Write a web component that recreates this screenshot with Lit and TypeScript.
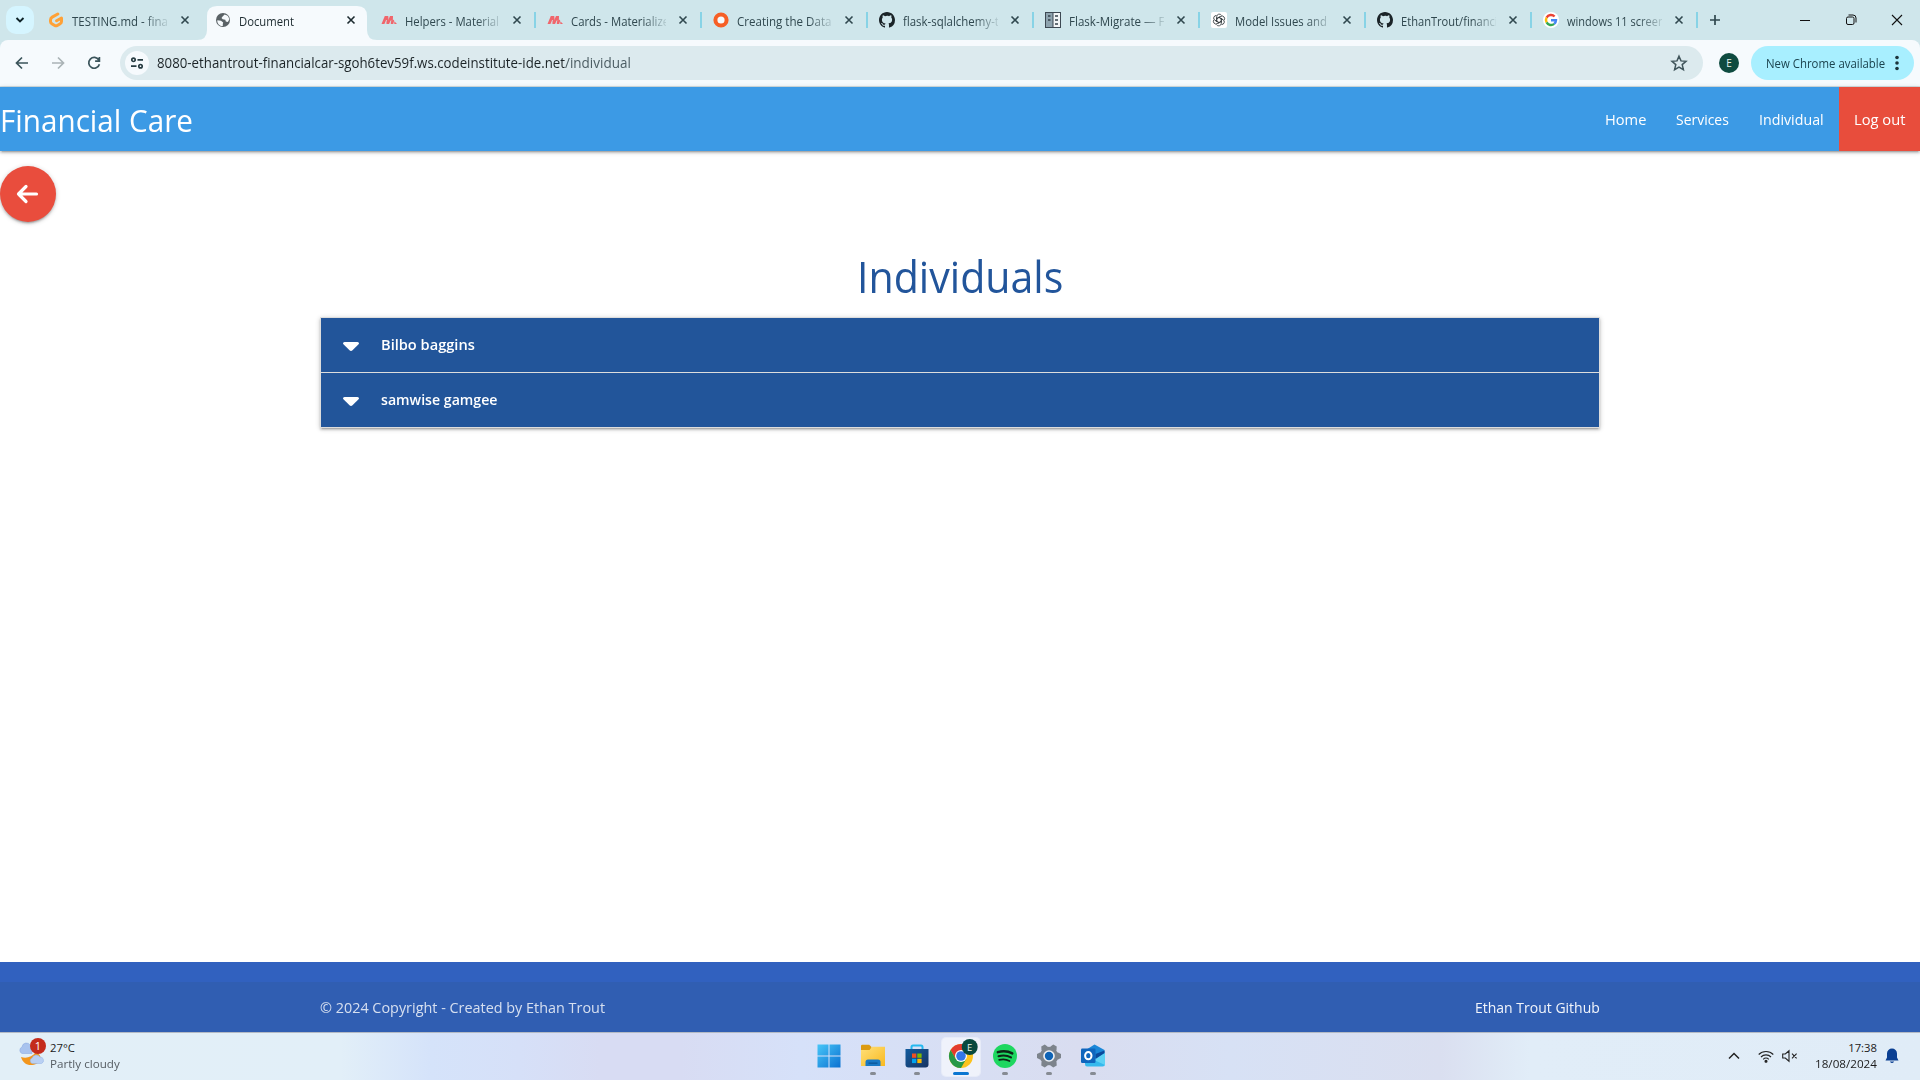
import { LitElement, html, css, svg, nothing } from "lit";
import { customElement, property } from "lit/decorators.js";

/** Text condensed or widened to a known advance width. */
@customElement("fit-text")
export class FitText extends LitElement {
  @property() text = "";
  @property({ type: Number }) width = 0;
  static styles = css`
    :host { display: inline-block; white-space: pre; }
    span { display: inline-block; transform-origin: 0 50%; }
  `;
  updated() {
    const s = this.shadowRoot!.querySelector("span")!;
    const w = s.offsetWidth;
    s.style.transform = `scaleX(${this.width / w})`;
    s.style.marginRight = `${this.width - w}px`;
  }
  render() {
    return html`<span>${this.text}</span>`;
  }
}

const fit = (text: string, width: number) => html`<fit-text .text=${text} .width=${width}></fit-text>`;

const github = svg`<path fill="#1b2428" d="M8 0C3.58 0 0 3.58 0 8c0 3.54 2.29 6.53 5.47 7.59.4.07.55-.17.55-.38 0-.19-.01-.82-.01-1.49-2.01.37-2.53-.49-2.69-.94-.09-.23-.48-.94-.82-1.13-.28-.15-.68-.52-.01-.53.63-.01 1.08.58 1.23.82.72 1.21 1.87.87 2.33.66.07-.52.28-.87.51-1.07-1.78-.2-3.64-.89-3.64-3.95 0-.87.31-1.59.82-2.15-.08-.2-.36-1.02.08-2.12 0 0 .67-.21 2.2.82A7.7 7.7 0 0 1 8 3.86c.68 0 1.36.09 2 .27 1.53-1.04 2.2-.82 2.2-.82.44 1.1.16 1.92.08 2.12.51.56.82 1.27.82 2.15 0 3.07-1.87 3.75-3.65 3.95.29.25.54.73.54 1.48 0 1.07-.01 1.93-.01 2.2 0 .21.15.46.55.38A8.01 8.01 0 0 0 16 8c0-4.42-3.58-8-8-8z"/>`;
const materialize = svg`<g fill="#f0666c"><path d="M.5 12 3.800 4h3.400L4 12z"/><path d="M4.700 4h2.500l.6 5.500L6.500 12H5.600z"/><path d="M5.600 12 9 4h3L8.400 12z"/><path d="M9.500 4H12l-.3 8H9.800z"/><path d="M9.800 12 12 7.600l1.200.8L12.200 12zM13.300 9.300 16 12h-2.700z"/></g><path stroke="#cfe6eb" stroke-width=".8" d="M3.600 12.600 5.600 8M8.400 12.600 10 8.500"/>`;

const icons: Record<string, unknown> = {
  gitpod: svg`<path d="M9.800 2 4.200 5.100Q2.500 6.100 2.500 8v1.600Q2.500 11 3.800 11.800L6.700 13.500Q8 14.200 9.300 13.500L12.200 11.800Q13.500 11 13.500 9.600V6L8.600 8.800" fill="none" stroke="#ffa136" stroke-width="3" stroke-linecap="round" stroke-linejoin="round"/>`,
  globe: svg`<circle cx="8" cy="8" r="7" fill="#5a6266"/><path fill="#f6fafd" d="M2.300 8.200 6 8.800l2.200 1.800-.4 1.500v2C4.600 14.200 2 11.400 2.300 8.200zM7.600 4.600 9.600 2.500l2.600.9c1.200 1 2 2.600 2 4.400l-1.400 2.300-2-.6-.5-1.700-2.600-.5L6.500 6z"/>`,
  materialize,
  ring: svg`<circle cx="8" cy="8" r="5.600" fill="#f6fafd" stroke="#f65f26" stroke-width="4"/>`,
  github,
  docs: svg`<path fill="#3d4852" d="M0 0h16v16H0z"/><path fill="#8ea3ae" d="M1 1h6.500v14H1z"/><path fill="#f2f5f6" d="M8.500 1H15v14H8.500z"/><path stroke="#36424b" stroke-width="1.600" d="M3 4h2.500M3 8h2.500M10 4h3M10 8h3M10 12h3"/>`,
  openai: svg`<rect width="16" height="16" rx="2" fill="#fff"/><g fill="none" stroke="#30383c" stroke-width=".8">${[0, 60, 120, 180, 240, 300].map(
    (a) => svg`<path transform="rotate(${a} 8 8)" d="M5.700 9.500V4.600A2.600 2.600 0 0 1 10.600 3.500M8 5.400 11.500 7.400"/>`,
  )}</g>`,
  google: svg`<circle cx="8" cy="8" r="8" fill="#fff"/><g fill="none" stroke-width="2.400"><path stroke="#ea4335" d="M3.600 5.600A5 5 0 0 1 11.600 4.500"/><path stroke="#fbbc05" d="M3.600 10.400A5 5 0 0 1 3.600 5.600"/><path stroke="#34a853" d="M3.600 10.400A5 5 0 0 0 11.200 11.900"/><path stroke="#4285f4" d="M8 8.200h5A5 5 0 0 1 11.200 11.900"/></g>`,
};

interface Tab { icon: string; title: string; width: number; active?: boolean; sep?: boolean; }
const tabs: Tab[] = [
  { icon: "gitpod", title: "TESTING.md - fina", width: 96 },
  { icon: "globe", title: "Document", width: 55, active: true },
  { icon: "materialize", title: "Helpers - Material", width: 94, sep: true },
  { icon: "materialize", title: "Cards - Materialize", width: 98, sep: true },
  { icon: "ring", title: "Creating the Data", width: 94, sep: true },
  { icon: "github", title: "flask-sqlalchemy-t", width: 96, sep: true },
  { icon: "docs", title: "Flask-Migrate — F", width: 96, sep: true },
  { icon: "openai", title: "Model Issues and", width: 92, sep: true },
  { icon: "github", title: "EthanTrout/financi", width: 97, sep: true },
  { icon: "google", title: "windows 11 screen", width: 98, sep: true },
];

@customElement("browser-chrome")
export class BrowserChrome extends LitElement {
  static styles = css`
    :host { display: block; height: 87px; flex: none; background: #cfe6eb; font-family: "Open Sans", "Noto Sans", sans-serif; color: #30484f; }
    svg { display: block; flex: none; }
    .strip { display: flex; height: 40px; align-items: center; }
    .search { width: 28px; height: 28px; margin-left: 6px; border-radius: 10px; background: #d5f5ff; display: grid; place-items: center; }
    .tabs { display: flex; margin-left: 2px; height: 40px; }
    .tab { position: relative; box-sizing: border-box; width: 166px; height: 40px; padding: 0 0 0 12px; display: flex; align-items: center; font-size: 11.700px; }
    .tab:first-child { margin-right: 1px; }
    .tab.active { color: #1d2b30; }
    .tab > * { position: relative; }
    .tab .bg { position: absolute; left: -6px; top: 6px; }
    .title { width: 95px; margin-left: 8px; line-height: 20px; padding-top: 1px; white-space: nowrap; }
    .faded { -webkit-mask-image: linear-gradient(90deg, #000 75%, rgba(0,0,0,.15)); mask-image: linear-gradient(90deg, #000 75%, rgba(0,0,0,.15)); }
    .close { margin-left: 11px; }
    .tab:first-child .close { margin-left: 12px; }
    .sep { position: absolute; right: -1px; top: 12px; width: 2px; height: 16px; background: #87d3e6; }
    .plus { margin-left: 12px; }
    .controls { margin-left: auto; display: flex; gap: 34px; padding-right: 17px; }
    .bar { height: 46px; background: #f6fafd; border-bottom: 1px solid #d3dfe2; border-radius: 8px 8px 0 0; display: flex; align-items: center; }
    .nav { display: flex; gap: 16px; padding-left: 12px; }
    .url { display: flex; align-items: center; height: 34px; width: 1583px; box-sizing: border-box; border-radius: 17px; background: #dceaee; margin-left: 16px; padding: 0 14px 0 5px; font-size: 13.700px; color: #1c2427; }
    .url fit-text { margin-bottom: 1px; }
    .tune { width: 24px; height: 24px; border-radius: 50%; background: #f6fafd; display: grid; place-items: center; margin-right: 8px; }
    .path { color: #4c5d63; }
    .star { margin-left: auto; }
    .avatar { width: 20px; height: 20px; border-radius: 50%; background: #0f4b40; color: #e6f2ee; display: grid; place-items: center; font-size: 10px; margin-left: 16px; }
    .chip { width: 163px; height: 34px; border-radius: 17px; background: #a8efff; box-sizing: border-box; display: flex; align-items: center; padding: 0 15px; font-size: 11.700px; color: #1c444f; margin-left: 12px; justify-content: space-between; }
    .chip fit-text { margin-bottom: 1px; }
  `;
  private tab(t: Tab) {
    return html`<div class="tab ${t.active ? "active" : ""}">
      ${t.active ? html`<svg class="bg" width="184" height="34"><path fill="#f6fafd" d="M0 34Q10 34 10 24V10Q10 0 20 0H160Q170 0 170 10V24Q170 34 180 34z"/></svg>` : nothing}
      <svg width="16" height="16" viewBox="0 0 16 16">${icons[t.icon]}</svg>
      <div class="title ${t.active ? "" : "faded"}">${fit(t.title, t.width)}</div>
      <svg class="close" width="12" height="12" viewBox="0 0 12 12"><path d="M2.500 2.500l7 7M9.500 2.500l-7 7" stroke="currentColor" stroke-width="1.600"/></svg>
      ${t.sep ? html`<div class="sep"></div>` : nothing}
    </div>`;
  }
  render() {
    return html`
      <div class="strip">
        <div class="search"><svg width="10" height="8" viewBox="0 0 10 8"><path d="M1.500 2 5 5.500 8.500 2" fill="none" stroke="#0f2429" stroke-width="1.900"/></svg></div>
        <div class="tabs">${tabs.map((t) => this.tab(t))}</div>
        <svg class="plus" width="12" height="12" viewBox="0 0 12 12"><path d="M6 1v10M1 6h10" stroke="#30484f" stroke-width="1.700"/></svg>
        <div class="controls">
          <svg width="12" height="12"><path d="M1 6.500h10" stroke="#111"/></svg>
          <svg width="12" height="12" viewBox="0 0 12 12" fill="none" stroke="#111"><rect x="1.500" y="3" width="7.500" height="7.500" rx="1.500"/><path d="M3.500 1h4.500a3 3 0 0 1 3 3v4.500"/></svg>
          <svg width="12" height="12"><path d="M1 1l10 10M11 1 1 11" stroke="#111" stroke-width="1.100"/></svg>
        </div>
      </div>
      <div class="bar">
        <div class="nav">
          <svg width="20" height="20" viewBox="0 0 20 20" fill="none" stroke="#3b545b" stroke-width="1.700"><path d="M16 10H5M10 4.500 4.500 10l5.500 5.500"/></svg>
          <svg width="20" height="20" viewBox="0 0 20 20" fill="none" stroke="#aab3b6" stroke-width="1.700"><path d="M4 10h11M10 4.500l5.500 5.500-5.500 5.500"/></svg>
          <svg width="20" height="20" viewBox="0 0 20 20" fill="none" stroke="#3b545b" stroke-width="1.700"><path d="M14.800 7A5.400 5.400 0 1 0 15.400 11.200M15.400 4v4.200h-4.300"/></svg>
        </div>
        <div class="url">
          <div class="tune"><svg width="14" height="14" viewBox="0 0 14 14" fill="none" stroke="#273c42" stroke-width="1.700"><circle cx="3.500" cy="3.800" r="1.700"/><path d="M7.500 3.800H13M1 10.200h5.500"/><circle cx="10.500" cy="10.200" r="1.700"/></svg></div>
          ${fit("8080-ethantrout-financialcar-sgoh6tev59f.ws.codeinstitute-ide.net", 408)}<span class="path">${fit("/individual", 66)}</span>
          <svg class="star" width="20" height="20" viewBox="0 0 20 20"><path d="M10 3.200l2 4.700 5 .4-3.800 3.300 1.200 5L10 14l-4.400 2.600 1.200-5L3 8.300l5-.4z" fill="none" stroke="#40555b" stroke-width="1.500"/></svg>
        </div>
        <div class="avatar">E</div>
        <div class="chip">${fit("New Chrome available", 119)}<svg width="4" height="16"><g fill="#1c343b"><circle cx="2" cy="2.500" r="1.800"/><circle cx="2" cy="8" r="1.800"/><circle cx="2" cy="13.500" r="1.800"/></g></svg></div>
      </div>`;
  }
}

@customElement("care-page")
export class CarePage extends LitElement {
  static styles = css`
    :host { display: flex; flex-direction: column; height: 945px; background: #fff; font-family: "Open Sans", "Noto Sans", sans-serif; font-size: 15px; }
    svg { display: block; }
    nav { display: flex; align-items: center; justify-content: space-between; height: 64px; flex: none; background: #3c9ae5; color: #fff; box-shadow: 0 2px 2px 0 rgba(0,0,0,.14), 0 3px 1px -2px rgba(0,0,0,.12), 0 1px 5px 0 rgba(0,0,0,.2); }
    .brand { font-size: 31.500px; line-height: 64px; height: 62px; }
    .links { display: flex; height: 64px; }
    .links div { padding: 1px 15px 0; height: 63px; line-height: 63px; }
    .links .out { background: #e84d3c; }
    .back { width: 56px; height: 56px; margin-top: 15px; border-radius: 50%; background: #e94d3d; display: grid; place-items: center; box-shadow: 0 2px 2px 0 rgba(0,0,0,.14), 0 3px 1px -2px rgba(0,0,0,.12), 0 1px 5px 0 rgba(0,0,0,.2); }
    .back svg { margin-right: 2px; }
    h3 { margin: 25px 0 11px; text-align: center; font-weight: 400; font-size: 43.500px; line-height: 59px; color: #22559b; }
    .list { width: 1280px; box-sizing: border-box; margin: 0 auto; border: 1px solid #ddd; border-bottom: 0; box-shadow: 0 2px 2px 0 rgba(0,0,0,.14), 0 3px 1px -2px rgba(0,0,0,.12), 0 1px 5px 0 rgba(0,0,0,.2); }
    .row { height: 54px; border-bottom: 1px solid #ddd; background: #22559a; color: #fff; display: flex; align-items: center; font-weight: 600; padding-left: 22px; }
    .row svg { margin-right: 22px; margin-top: 3px; }
    .row fit-text { margin-bottom: 2px; }
    footer { margin-top: auto; padding-top: 20px; background: #3161bf; color: rgba(255,255,255,.8); }
    .copy { height: 50px; background: #305eb2; }
    .inner { width: 1280px; margin: 0 auto; line-height: 50px; height: 50px; display: flex; justify-content: space-between; }
    .inner .gh { color: #f2f5fb; }
  `;
  render() {
    return html`
      <nav>
        <div class="brand">${fit("Financial Care", 193)}</div>
        <div class="links">
          <div>${fit("Home", 41)}</div><div>${fit("Services", 53)}</div><div>${fit("Individual", 64.5)}</div><div class="out">${fit("Log out", 51)}</div>
        </div>
      </nav>
      <div class="back"><svg width="24" height="20" viewBox="0 0 24 20"><path d="M21.500 10H3.500M11 2.500 3.500 10l7.500 7.500" fill="none" stroke="#fff" stroke-width="3.200" stroke-linecap="round" stroke-linejoin="round"/></svg></div>
      <h3>${fit("Individuals", 206)}</h3>
      <div class="list">
        ${[["Bilbo baggins", 93.5], ["samwise gamgee", 117]].map(
          ([n, w]) => html`<div class="row"><svg width="16" height="10" viewBox="0 0 16 10"><path fill="#fff" d="M1.500 0h13Q17 .5 15.300 2.500L9.500 8.200Q8 9.600 6.500 8.200L.7 2.500Q-1 .5 1.500 0z"/></svg>${fit(n as string, w as number)}</div>`,
        )}
      </div>
      <footer><div class="copy"><div class="inner"><span>${fit("© 2024 Copyright - Created by Ethan Trout", 285)}</span><span class="gh">${fit("Ethan Trout Github", 125)}</span></div></div></footer>`;
  }
}

@customElement("task-bar")
export class TaskBar extends LitElement {
  static styles = css`
    :host { display: grid; grid-template-columns: 1fr auto 1fr; height: 48px; box-sizing: border-box; border-top: 1px solid #b4bac4; font-family: "Open Sans", "Noto Sans", sans-serif; font-size: 11.300px; color: #1b1b1b;
      background: linear-gradient(90deg, #e2eff7 0, #e2eff8 340px, #d5e3fa 430px, #d6e0f8 520px, #d8dcf3 600px, #d8dcf3 680px, #d6e1f9 800px, #d9ddf0 1080px, #d7e1f5 1230px, #dadff0 1440px, #e1edf8 1530px, #e0ecf7 100%); }
    svg { display: block; flex: none; overflow: visible; }
    .weather { display: flex; padding: 5px 0 0 18px; }
    .lines { line-height: 16px; padding-top: 2px; margin-left: 4px; }
    .dim { color: #555c62; }
    .apps { display: flex; gap: 6px; padding: 5px 0 0 2px; }
    .app { width: 38px; height: 38px; border-radius: 4px; display: flex; flex-direction: column; align-items: center; }
    .app.on { background: rgba(255,255,255,.6); box-shadow: 0 0 0 1px rgba(255,255,255,.4); }
    .app svg { margin-top: 6px; }
    .dot { width: 6px; height: 3px; border-radius: 2px; background: #868b93; margin-top: 4px; }
    .on .dot { width: 16px; background: #0a76d1; }
    .tray { display: flex; justify-content: flex-end; align-items: center; padding: 0 21px 2px 0; }
    .wifi { margin-left: 18px; }
    .mute { margin-left: 8px; }
    .clock { text-align: right; line-height: 16px; margin: 0 8px 0 17px; }
  `;
  private app(body: unknown, dot = true, on = false) {
    return html`<div class="app ${on ? "on" : ""}"><svg width="24" height="24" viewBox="0 0 24 24">${body}</svg>${dot ? html`<div class="dot"></div>` : nothing}</div>`;
  }
  render() {
    return html`
      <div class="weather">
        <svg width="28" height="28" viewBox="0 0 28 28">
          <path fill="#a9c3ee" stroke="#86a5de" stroke-width=".5" d="M4 15.500a3.500 3.500 0 0 1 0-6.500 4.500 4.500 0 0 1 8.500-1.500L14 15.500z"/>
          <path fill="#f3961c" d="M3 19c5 1.500 11 .5 15-5 6 3 6 9 1 11.500C12 29 5 26.500 3 19z"/>
          <path fill="#b9d0f3" stroke="#8eb0e6" stroke-width=".5" d="M14 25.500a3 3 0 0 1 0-5.500 4.500 4.500 0 0 1 8-1 3.400 3.400 0 0 1 1.500 6.500z"/>
          <circle cx="20" cy="8" r="8" fill="#c42b1c"/><text x="20" y="12" font-size="11" fill="#fff" text-anchor="middle">1</text>
        </svg>
        <div class="lines"><div>${fit("27°C", 25)}</div><div class="dim">${fit("Partly cloudy", 70)}</div></div>
      </div>
      <div class="apps">
        ${this.app(svg`<defs><linearGradient id="w" gradientUnits="userSpaceOnUse" x2="24" y2="24"><stop stop-color="#49c8f9"/><stop offset="1" stop-color="#0a6fd0"/></linearGradient></defs><g fill="url(#w)"><rect x=".5" y=".5" width="11" height="11"/><rect x="12.500" y=".5" width="11" height="11"/><rect x=".5" y="12.500" width="11" height="11"/><rect x="12.500" y="12.500" width="11" height="11"/></g>`, false)}
        ${this.app(svg`<defs><linearGradient id="f" x2="1" y2="1"><stop stop-color="#ffe07a"/><stop offset="1" stop-color="#f9b91f"/></linearGradient></defs><path fill="#dc9a10" d="M0 2Q0 .8 1.200 .8h7L10.500 3v4H0z"/><path fill="url(#f)" d="M0 6h8.500L11 2.800h13V22H0z"/><path fill="#1979c5" d="M4.500 22v-4q0-2.500 2.500-2.500h10q2.500 0 2.500 2.500v4z"/><path fill="#0c5697" d="M7.500 18.500h9v1.300h-9z"/>`)}
        ${this.app(svg`<defs><linearGradient id="s" x2="1" y2="1"><stop stop-color="#125b9e"/><stop offset="1" stop-color="#183462"/></linearGradient></defs><path d="M6.500 6V3q0-1.500 1.500-1.500h8q1.500 0 1.500 1.500v3" fill="none" stroke="#24b8ef" stroke-width="2"/><path fill="url(#s)" d="M.5 5h23v15.500q0 3-3 3h-17q-3 0-3-3z"/><path fill="#f25022" d="M7 9.500h4.300v4.300H7z"/><path fill="#7fba00" d="M12.300 9.500h4.300v4.300h-4.300z"/><path fill="#00a4ef" d="M7 14.800h4.300v4.300H7z"/><path fill="#ffb900" d="M12.300 14.800h4.300v4.300h-4.300z"/>`)}
        ${this.app(svg`<circle cx="12" cy="12" r="12" fill="#fcc31e"/><path fill="#e33b2e" d="M1.600 6A12 12 0 0 1 22.400 6H12L6.800 15z"/><path fill="#279847" d="M1.600 6A12 12 0 0 0 12 24l5.200-9H6.800z"/><circle cx="12" cy="12" r="6" fill="#fff"/><circle cx="12" cy="12" r="4.800" fill="#3277e8"/><circle cx="20.700" cy="3" r="8" fill="#07493e"/><text x="20.700" y="6.500" font-size="9.500" fill="#e8f3ee" text-anchor="middle">E</text>`, true, true)}
        ${this.app(svg`<circle cx="12" cy="12" r="12" fill="#1ed760"/><g fill="none" stroke="#0d2617" stroke-linecap="round"><path stroke-width="2.400" d="M4.800 8.200c5-1.500 10.500-1 14.500 1.200"/><path stroke-width="2" d="M5.500 12.200c4.500-1.300 9-.8 12.500 1.200"/><path stroke-width="1.700" d="M6.200 15.900c3.700-1 7.300-.6 10.300 1.100"/></g>`)}
        ${this.app(svg`<g fill="#7d848c">${[0, 60, 120].map((a) => svg`<path transform="rotate(${a} 12 12)" d="M0 10 3 8.500h18l3 1.500v4l-3 1.500H3L0 14z"/>`)}<circle cx="12" cy="12" r="9.200"/></g><circle cx="12" cy="12" r="5.800" fill="#eef1f5"/><circle cx="12" cy="12" r="4.200" fill="#0e63b5"/>`)}
        ${this.app(svg`<path fill="#1a87d8" d="M4 6.500 13.500.5 23.500 6v8L4 18z"/><path fill="#35b9ed" d="M24 8.500V20q0 2.500-2.500 2.500H6q-2 0-2-2.500V17l10-2z"/><path fill="#6fdcf7" opacity=".7" d="M24 9v12L12 15.500z"/><path fill="#0a4a9c" d="M14.500 10 23.500 6.500V9L14.500 15z"/><rect y="4.500" width="14.500" height="14.500" rx="1.200" fill="#0f66bd"/><ellipse cx="7.300" cy="11.700" rx="3.200" ry="3.600" fill="none" stroke="#fff" stroke-width="2"/>`)}
      </div>
      <div class="tray">
        <svg width="12" height="8" viewBox="0 0 12 8"><path d="M1 6.500 6 1.500l5 5" fill="none" stroke="#222" stroke-width="1.500"/></svg>
        <svg class="wifi" width="16" height="14" viewBox="0 0 16 14" fill="none" stroke="#222" stroke-width="1.100"><path d="M.7 5.500a10.300 10.300 0 0 1 14.600 0M3 8a7 7 0 0 1 10 0M5.200 10.300a4 4 0 0 1 5.600 0"/><circle cx="8" cy="12.300" r="1" fill="#222"/></svg>
        <svg class="mute" width="16" height="12" viewBox="0 0 16 12" fill="none" stroke="#222" stroke-width="1.100"><path d="M.7 4v4h2.600l3.700 3.200V.8L3.300 4zM10 3.700l4.600 4.600M14.600 3.700 10 8.300"/></svg>
        <div class="clock"><div>${fit("17:38", 29)}</div><div>${fit("18/08/2024", 62)}</div></div>
        <svg width="14" height="16" viewBox="0 0 14 16" fill="#0a3f92"><path d="M7 .5A5 5 0 0 1 12 5.500V9.500l1.500 3H.5L2 9.500V5.500A5 5 0 0 1 7 .5zM4.800 13.500h4.400Q7 16.500 4.800 13.500z"/></svg>
      </div>`;
  }
}

@customElement("app-root")
export class AppRoot extends LitElement {
  static styles = css`
    :host { display: flex; flex-direction: column; width: 1920px; height: 1080px; overflow: hidden; background: #fff; }
  `;
  render() {
    return html`<browser-chrome></browser-chrome><care-page></care-page><task-bar></task-bar>`;
  }
}
